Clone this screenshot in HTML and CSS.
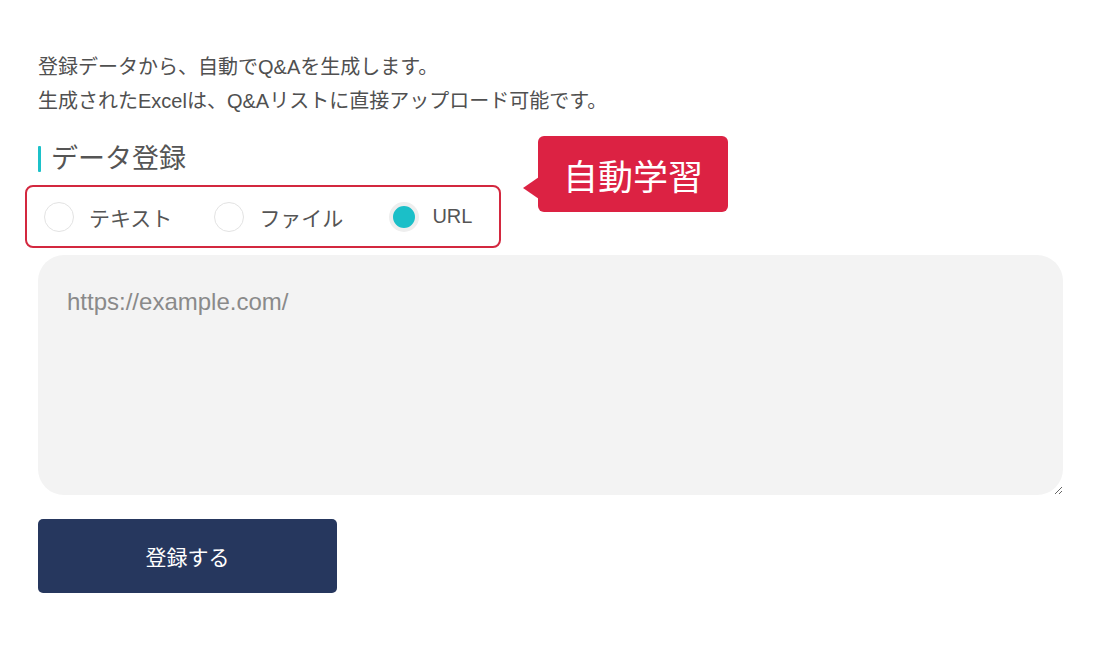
FILE: index.html
```html
<!DOCTYPE html>
<html lang="ja">
<head>
<meta charset="utf-8">
<title>データ登録</title>
<link rel="stylesheet" href="styles.css">
</head>
<body>
<main class="page">
  <p class="intro">登録データから、自動でQ&amp;Aを生成します。<br>生成されたExcelは、Q&amp;Aリストに直接アップロード可能です。</p>
  <h2 class="section-title">データ登録</h2>
  <div class="radio-row">
    <div class="radio-box">
      <label class="radio"><span class="dot"></span><span class="radio-label">テキスト</span></label>
      <label class="radio"><span class="dot"></span><span class="radio-label">ファイル</span></label>
      <label class="radio radio-url"><span class="dot checked"></span><span class="radio-label latin">URL</span></label>
    </div>
    <div class="callout">自動学習</div>
  </div>
  <textarea class="url-input" placeholder="https://example.com/"></textarea>
  <button class="submit" type="button">登録する</button>
</main>
</body>
</html>
```
FILE: styles.css
```css
html, body {
  margin: 0;
  padding: 0;
  background: #ffffff;
}
body {
  font-family: "Liberation Sans", "Noto Sans CJK JP", sans-serif;
  color: #505050;
}
.page {
  padding: 50px 0 0 38px;
  width: 1025px;
}
.intro {
  margin: 0;
  font-size: 20px;
  line-height: 34px;
  color: #505050;
}
.section-title {
  margin: 26px 0 0 0;
  font-size: 27px;
  font-weight: 400;
  line-height: 30px;
  height: 30px;
  color: #555555;
  display: flex;
  align-items: center;
  gap: 10px;
}
.section-title::before {
  content: "";
  width: 3px;
  height: 26px;
  background: #1cc1c9;
  border-radius: 1px;
}
.radio-row {
  position: relative;
  margin: 11px 0 0 -13px;
}
.radio-box {
  box-sizing: border-box;
  width: 476px;
  height: 63px;
  border: 2px solid #d3283f;
  border-radius: 8px;
  display: flex;
  align-items: center;
  padding: 0 0 0 17px;
  gap: 42px;
}
.radio {
  display: flex;
  align-items: center;
  gap: 15px;
  font-family: "Noto Sans CJK JP", sans-serif;
  font-size: 21px;
  color: #555555;
}
.radio-url {
  margin-left: 4px;
}
.radio-label.latin {
  font-family: "Liberation Sans", sans-serif;
  font-size: 20px;
  margin-left: -2px;
}
.dot {
  box-sizing: border-box;
  width: 30px;
  height: 30px;
  border-radius: 50%;
  border: 1.5px solid #e3e3e3;
  background: #ffffff;
}
.dot.checked {
  border: 4px solid #eeeeee;
  background: #1bbfc8;
}
.callout {
  position: absolute;
  left: 513px;
  top: -49px;
  width: 190px;
  height: 76px;
  background: #dc2243;
  border-radius: 6px;
  color: #ffffff;
  font-family: "Noto Sans CJK JP", sans-serif;
  font-size: 35px;
  font-weight: 400;
  display: flex;
  align-items: center;
  justify-content: center;
}
.callout::before {
  content: "";
  position: absolute;
  left: -15px;
  top: 41px;
  border-top: 11px solid transparent;
  border-bottom: 11px solid transparent;
  border-right: 16px solid #dc2243;
}
.url-input {
  display: block;
  box-sizing: border-box;
  margin: 7px 0 0 0;
  width: 1025px;
  height: 240px;
  border: none;
  outline: none;
  border-radius: 26px;
  background: #f3f3f3;
  padding: 32px 29px;
  font-family: "Liberation Sans", sans-serif;
  font-size: 24px;
  line-height: 30px;
  color: #333333;
}
.url-input::placeholder {
  color: #8a8a8a;
}
.submit {
  display: flex;
  align-items: center;
  justify-content: center;
  margin: 24px 0 0 0;
  width: 299px;
  height: 74px;
  border: none;
  border-radius: 5px;
  background: #26375e;
  color: #ffffff;
  font-family: "Noto Sans CJK JP", sans-serif;
  font-size: 21px;
  cursor: pointer;
}
```
